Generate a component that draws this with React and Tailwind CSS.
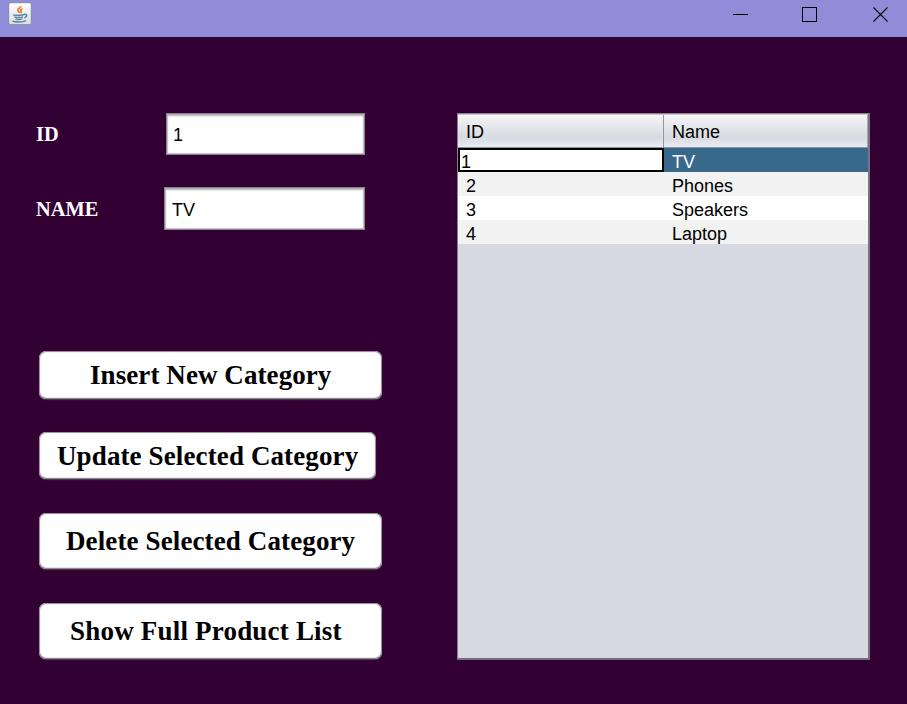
const rows = [
  { id: "2", name: "Phones", tone: "bg-[#f2f2f2]" },
  { id: "3", name: "Speakers", tone: "bg-white" },
  { id: "4", name: "Laptop", tone: "bg-[#f2f2f2]" },
];

const buttons = [
  { label: "Insert New Category", box: "w-[343px] h-12 mb-[33px] pl-[51px] pt-[9px] tracking-[0.08px]" },
  { label: "Update Selected Category", box: "w-[337px] h-[47px] mb-[34px] pl-[18px] pt-[9px] tracking-[0.12px]" },
  { label: "Delete Selected Category", box: "w-[343px] h-14 mb-[34px] pl-[27px] pt-[13px] tracking-[0.12px]" },
  { label: "Show Full Product List", box: "w-[343px] h-14 pl-[31px] pt-[13px] tracking-[0.2px]" },
];

function JavaIcon() {
  return (
    <svg className="ml-2 mt-[2px] shrink-0" width="24" height="24" viewBox="0 0 24 24" fill="none">
      <defs>
        <linearGradient id="tile" x1="0" y1="0" x2="0" y2="1">
          <stop offset="0" stopColor="#ffffff" />
          <stop offset="1" stopColor="#d9dee2" />
        </linearGradient>
      </defs>
      <rect x="0.7" y="0.7" width="22.6" height="22" rx="2" fill="url(#tile)" stroke="#828aa6" strokeWidth="1" />
      <path d="M12.6 4c1 2-3.6 2.6-2.8 4.6.3.9 1.4 1.4 1.4 2.4M14.6 6.8c-2.2 1-2.5 1.7-1.5 2.8.5.7.1 1.2-.5 1.7" stroke="#ee8135" strokeWidth="1.8" />
      <path d="M5.4 12.5c0 1 6 1.2 10.6.2M6.4 14.8c1.5.9 6.6.9 8.8.1M7.4 16.8c1.8.9 5 .8 7 .1M16 12.5c3.6-.9 3.6 2.4.2 3.2M4.6 18.8c1.8 1.5 10 1.6 13.6-.2" stroke="#5b87a6" strokeWidth="1.5" />
    </svg>
  );
}

function TitleBar() {
  return (
    <header className="flex h-[37px] items-start bg-[#8f8cd8]">
      <JavaIcon />
      <svg className="ml-auto mr-[18px] mt-[7px]" width="156" height="16" fill="none" stroke="#000" shapeRendering="crispEdges">
        <path d="M0 7.5h15M69.5.5h14v14h-14z" />
        <path d="M140.5.5l14 14M154.5.5l-14 14" shapeRendering="auto" strokeWidth="1.1" />
      </svg>
    </header>
  );
}

function Field({ label, value, row, labelPad, box, pad }) {
  return (
    <div className={`flex justify-between ${row}`}>
      <label className={`font-['Liberation_Serif',serif] text-[20.4px] leading-6 font-bold text-white ${labelPad}`}>{label}</label>
      <div className={`border border-[#8b8390] border-t-[#858089] bg-white text-[18px] leading-5 text-black shadow-[inset_0_2px_2px_#b0b0b0,inset_1px_0_1px_#c4c4c4,inset_-1px_0_1px_#c4c4c4,inset_0_-1px_1px_#c4c4c4] ${box} ${pad}`}>
        {value}
      </div>
    </div>
  );
}

function CategoryTable() {
  return (
    <section className="mt-[76px] h-[547px] w-[413px] border border-[#86808f] border-r-2 border-b-2 border-r-[#797386] border-b-[#716e80] bg-[#d6d9e0] text-[18px] leading-5 text-black">
      <div className="flex h-[34px] border-t border-b border-t-[#c9cad0] border-b-[#8d9098] bg-linear-to-b from-[#f5f5f7] via-[#d8dae1] via-70% to-[#e9edf5]">
        <div className="w-[206px] border-r border-[#94969e] pt-[7px] pl-2">ID</div>
        <div className="flex-1 border-r border-[#a5a7af] pt-[7px] pl-2">Name</div>
      </div>
      <div className="flex h-6">
        <div className="w-[206px] border-2 border-black bg-white pt-[2px] pl-px">1</div>
        <div className="flex-1 bg-[#39698a] pt-1 pl-2 text-white">TV</div>
      </div>
      {rows.map((r) => (
        <div key={r.id} className={`flex h-6 pt-1 ${r.tone}`}>
          <div className="w-[206px] pl-2">{r.id}</div>
          <div className="pl-2">{r.name}</div>
        </div>
      ))}
    </section>
  );
}

export default function App() {
  return (
    <div className="flex h-[704px] w-[907px] flex-col overflow-hidden bg-[#330033] font-['Liberation_Sans',Arial,sans-serif]">
      <TitleBar />
      <main className="flex flex-1 pl-9">
        <div className="w-[421px] pt-[76px]">
          <Field label="ID" value="1" row="w-[329px] mb-8" labelPad="pt-[9px]" box="w-[199px] h-[42px]" pad="pt-[11px] pl-[6px]" />
          <Field label="NAME" value="TV" row="w-[329px]" labelPad="pt-[10px]" box="w-[201px] h-[43px]" pad="pt-3 pl-[7px]" />
          <div className="mt-[121px] ml-[3px] flex flex-col items-start">
            {buttons.map((b) => (
              <button
                key={b.label}
                className={`flex items-start rounded-[7px] bg-white font-['Liberation_Serif',serif] text-[27px] leading-[30px] font-bold whitespace-nowrap text-black shadow-[inset_0_0_1px_1px_#8e8894,inset_0_-1px_1px_#77747c,0_1px_1px_#4a3f52] ${b.box}`}
              >
                {b.label}
              </button>
            ))}
          </div>
        </div>
        <CategoryTable />
      </main>
    </div>
  );
}
